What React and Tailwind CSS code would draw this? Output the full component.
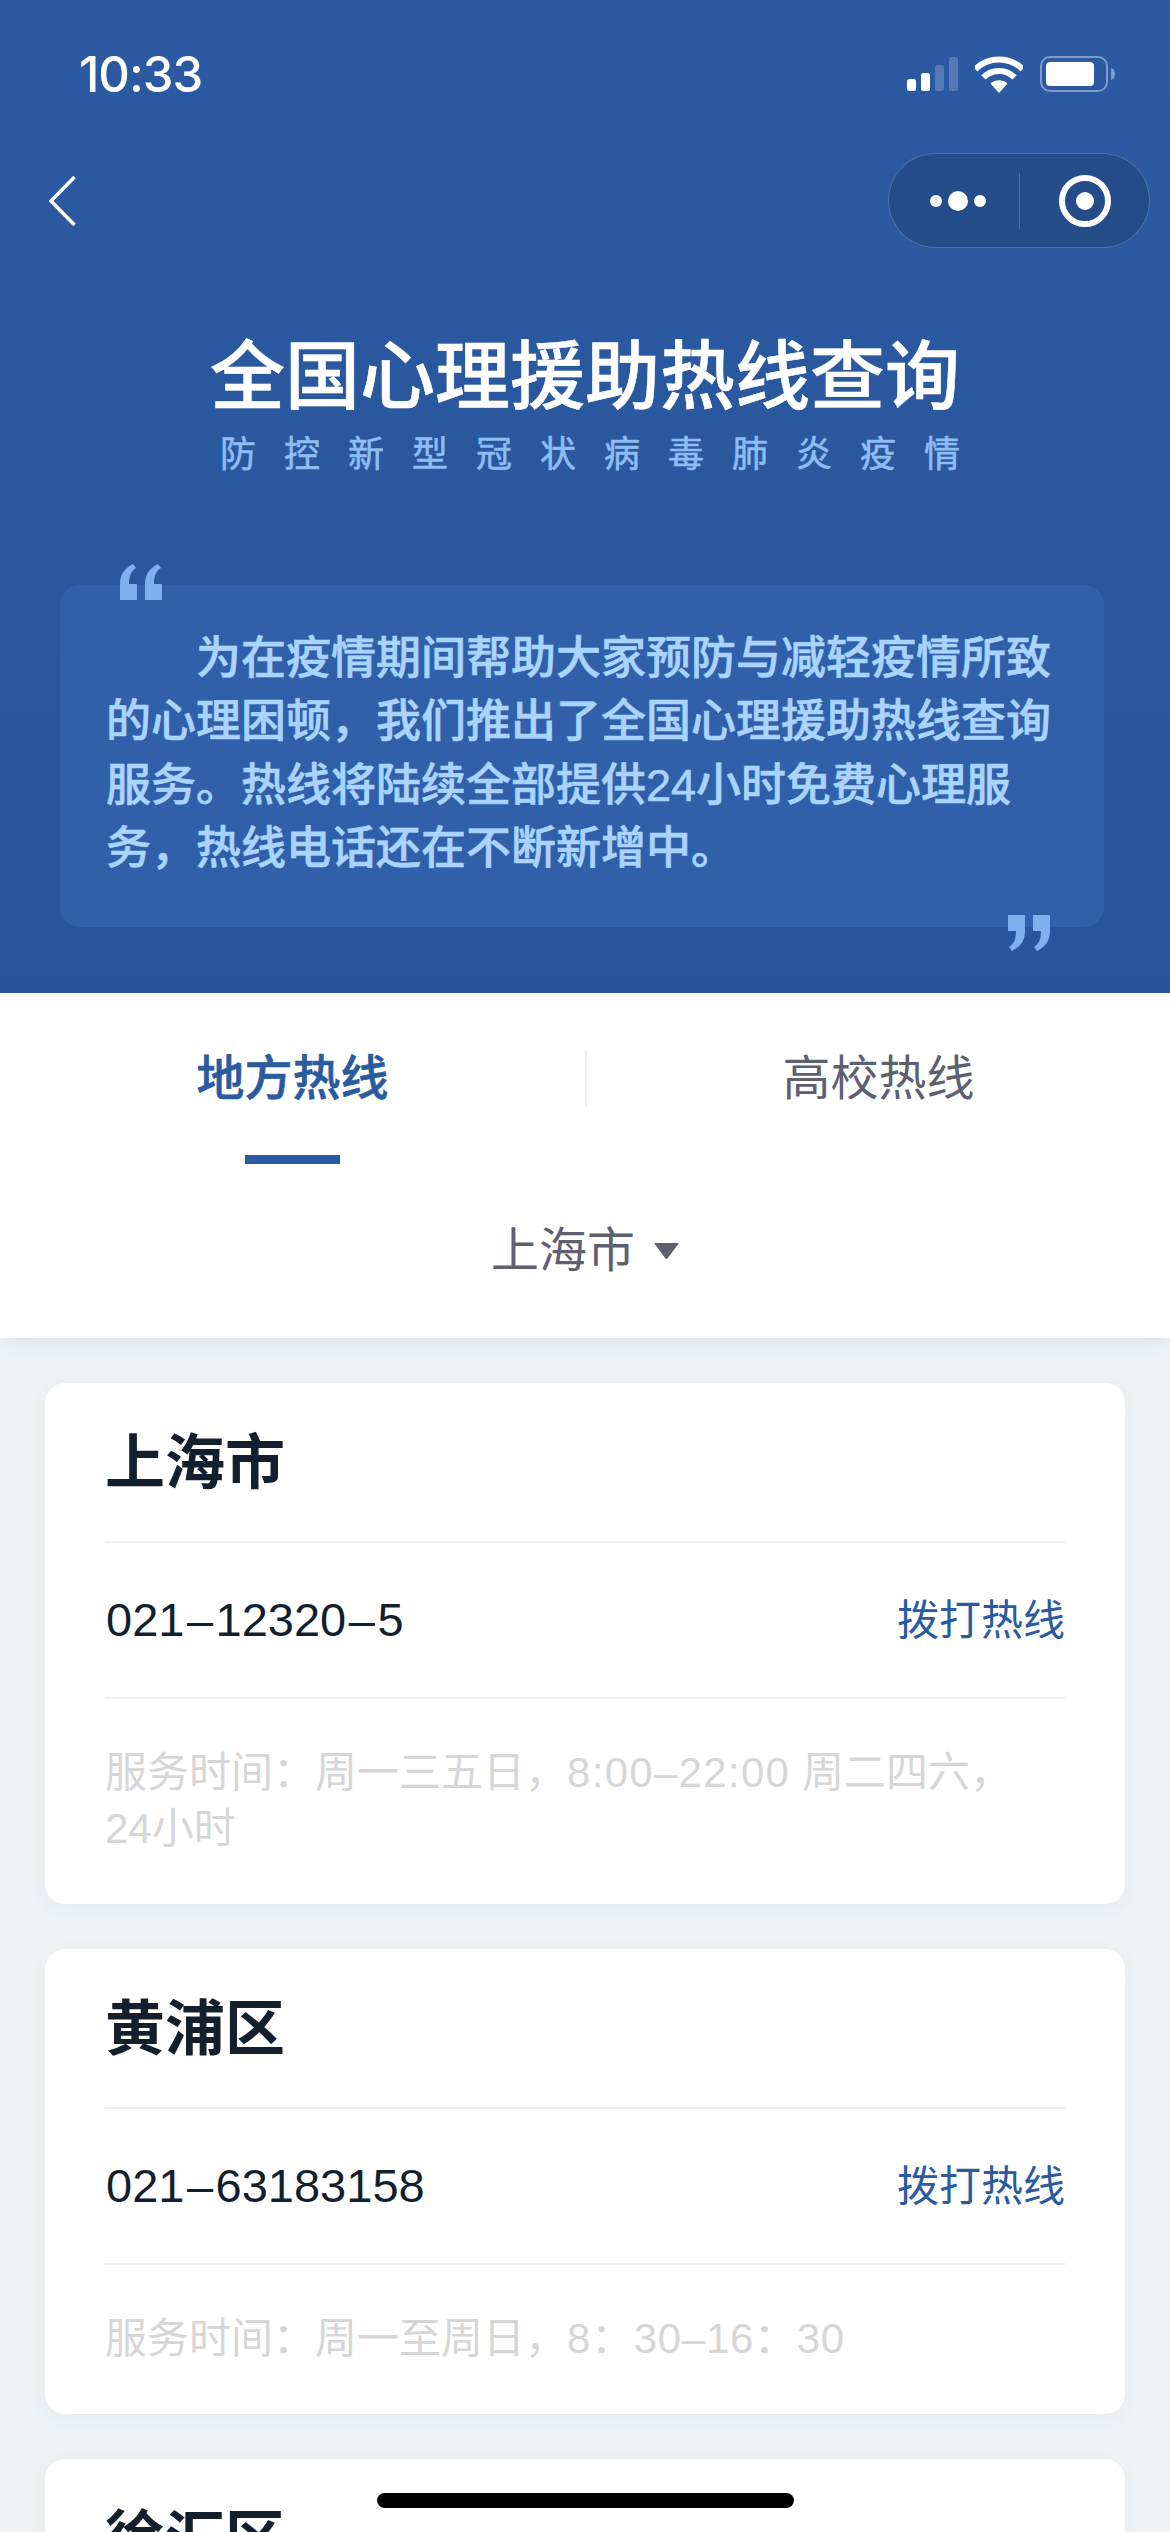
const QuoteMark = ({ className }) => {
  return (
    <svg width="42" height="36" viewBox="0 0 42 36" fill="#7fb0f0" className={className}>
      <path d="M13 0 L16 4 C11 7 9 12 9 20 L17 20 L17 36 L0 36 L0 20 C0 10 5 4 13 0 Z" />
      <path d="M38 0 L41 4 C36 7 34 12 34 20 L42 20 L42 36 L25 36 L25 20 C25 10 30 4 38 0 Z" />
    </svg>
  );
};

const StatusIcons = () => {
  return (
    <div className="flex items-center">
      <svg width="51" height="34" viewBox="0 0 51 34" fill="white">
        <rect x="0" y="22" width="9" height="12" rx="2.5" />
        <rect x="14" y="16" width="9" height="18" rx="2.5" />
        <rect x="28" y="8" width="9" height="26" rx="2.5" opacity="0.2" />
        <rect x="42" y="0" width="9" height="34" rx="2.5" opacity="0.2" />
      </svg>
      <svg width="48" height="37" viewBox="0 0 48 37" className="ml-[17px]">
        <path d="M24 37 L15.5 27.5 A13 13 0 0 1 32.5 27.5 Z" fill="white" />
        <path d="M8.4 21.4 A22 22 0 0 1 39.6 21.4" fill="none" stroke="white" strokeWidth="6" />
        <path d="M0.3 13.3 A33.5 33.5 0 0 1 47.7 13.3" fill="none" stroke="white" strokeWidth="6" />
      </svg>
      <svg width="75" height="36" viewBox="0 0 75 36" fill="none" className="ml-[17px]">
        <rect x="1" y="1" width="66" height="34" rx="9" stroke="white" strokeOpacity="0.4" strokeWidth="2" />
        <rect x="6" y="6" width="48" height="24" rx="4" fill="white" />
        <path d="M71 12 C74 13 75 15 75 18 C75 21 74 23 71 24 Z" fill="white" fillOpacity="0.4" />
      </svg>
    </div>
  );
};

const Capsule = () => {
  return (
    <div className="w-[262px] h-[95px] rounded-full bg-[#244c88] border-[1.5px] border-white/20 flex items-center">
      <div className="w-[130px] pl-[7px] flex justify-center">
        <svg width="56" height="20" viewBox="0 0 56 20" fill="white">
          <circle cx="6" cy="10" r="6" />
          <circle cx="28" cy="10" r="10" />
          <circle cx="50" cy="10" r="6" />
        </svg>
      </div>
      <div className="w-px h-[56px] bg-white/20" />
      <div className="flex-1 flex justify-center">
        <svg width="52" height="52" viewBox="0 0 52 52" fill="none">
          <circle cx="26" cy="26" r="23" stroke="white" strokeWidth="6" />
          <circle cx="26" cy="26" r="9" fill="white" />
        </svg>
      </div>
    </div>
  );
};

const Header = () => {
  return (
    <div className="h-[993px] pt-[50px] bg-gradient-to-b from-[#2b5aa2] to-[#28569c]">
      <div className="h-[48px] pl-[79px] pr-[55px] flex items-center justify-between">
        <span className="font-['Inter','Liberation_Sans',sans-serif] text-[49px] font-medium leading-none tracking-[-1px] text-white">
          10:33
        </span>
        <StatusIcons />
      </div>

      <div className="pt-[55px] pl-[49px] pr-[20px] flex items-center justify-between">
        <svg width="27" height="50" viewBox="0 0 27 50" fill="none" stroke="white" strokeWidth="3.5">
          <path d="M25.5 1 L2 25 L25.5 49" />
        </svg>
        <Capsule />
      </div>

      <h1 className="mt-[92px] text-center text-[75px] leading-[74px] font-medium text-white [-webkit-text-stroke:0.6px_currentColor]">
        全国心理援助热线查询
      </h1>
      <p className="mt-[21px] pl-[38px] text-center text-[36px] leading-[40px] tracking-[28px] text-[#8dbdf2] [-webkit-text-stroke:0.6px_currentColor]">
        防控新型冠状病毒肺炎疫情
      </p>

      <div className="relative mt-[110px] ml-[60px] mr-[66px] h-[342px] rounded-[20px] bg-[#2f60a9] pt-[42px] pl-[46px] pr-[51px]">
        <QuoteMark className="absolute left-[60px] top-[-21px]" />
        <p className="text-[45px] leading-[63.3px] font-medium indent-[90px] text-[#a8d4ff] [-webkit-text-stroke:0.6px_currentColor]">
          为在疫情期间帮助大家预防与减轻疫情所致的心理困顿，我们推出了全国心理援助热线查询服务。热线将陆续全部提供24小时免费心理服务，热线电话还在不断新增中。
        </p>
        <QuoteMark className="absolute right-[54px] bottom-[-24px] rotate-180" />
      </div>
    </div>
  );
};

const Tabs = () => {
  return (
    <div className="relative z-10 bg-white pt-[57px] pb-[59px] shadow-[0_4px_24px_rgba(30,50,80,0.08)]">
      <div className="grid grid-cols-2">
        <div className="flex flex-col items-center">
          <div className="h-[57px] flex items-center text-[48px] font-medium text-[#2a5aa0] [-webkit-text-stroke:0.6px_currentColor]">
            地方热线
          </div>
          <div className="mt-[48px] w-[95px] h-[9px] bg-[#2a5aa0]" />
        </div>
        <div className="h-[57px] border-l-2 border-[#f0f0f0] flex items-center justify-center text-[48px] text-[#5e6070]">
          高校热线
        </div>
      </div>
      <div className="mt-[59px] h-[56px] flex items-center justify-center gap-[19px] text-[48px] text-[#5e6070]">
        <span>上海市</span>
        <svg width="25" height="16" viewBox="0 0 25 16" fill="#5e6070">
          <path d="M1 0 L24 0 Q25 0 24.4 1 L13.5 15.4 Q12.5 16 11.5 15.4 L0.6 1 Q0 0 1 0 Z" />
        </svg>
      </div>
    </div>
  );
};

const HotlineCard = ({ name, phone, children }) => {
  return (
    <div className="bg-white rounded-[20px] px-[60px] shadow-[0_4px_20px_rgba(30,50,80,0.05)]">
      <div className="h-[160px] pt-[4px] border-b-2 border-[#eeeeee] flex items-center text-[60px] font-bold text-[#141f2e]">
        {name}
      </div>
      {phone && (
        <>
          <div className="h-[156px] border-b-2 border-[#eeeeee] flex items-center justify-between">
            <span className="text-[47px] ml-px text-[#141f2e]">
              {phone.map((part, i) => (
                <span key={part}>
                  {i > 0 && <span className="mx-[2.5px]">–</span>}
                  {part}
                </span>
              ))}
            </span>
            <span className="text-[42px] text-[#2a5aa0]">拨打热线</span>
          </div>
          <p className="pt-[46px] pb-[47px] text-[42px] leading-[56px] text-[#d6d6d6]">{children}</p>
        </>
      )}
    </div>
  );
};

export default function App() {
  return (
    <div className="relative h-[2532px] overflow-hidden bg-[#eff3f6] font-['Liberation_Sans','Noto_Sans_CJK_SC',sans-serif]">
      <Header />
      <Tabs />
      <div className="px-[45px] pt-[45px] flex flex-col gap-[45px]">
        <HotlineCard name="上海市" phone={["021", "12320", "5"]}>
          服务时间：周一三五日，<span className="tracking-[1.3px]">8:00–22:00</span> 周二四六，
          <br />
          24小时
        </HotlineCard>
        <HotlineCard name="黄浦区" phone={["021", "63183158"]}>
          服务时间：周一至周日，<span className="tracking-[0.7px]">8：30–16：30</span>
        </HotlineCard>
        <HotlineCard name="徐汇区" />
      </div>
      <div className="absolute bottom-[24px] left-[377px] w-[417px] h-[15px] rounded-full bg-black" />
    </div>
  );
}
